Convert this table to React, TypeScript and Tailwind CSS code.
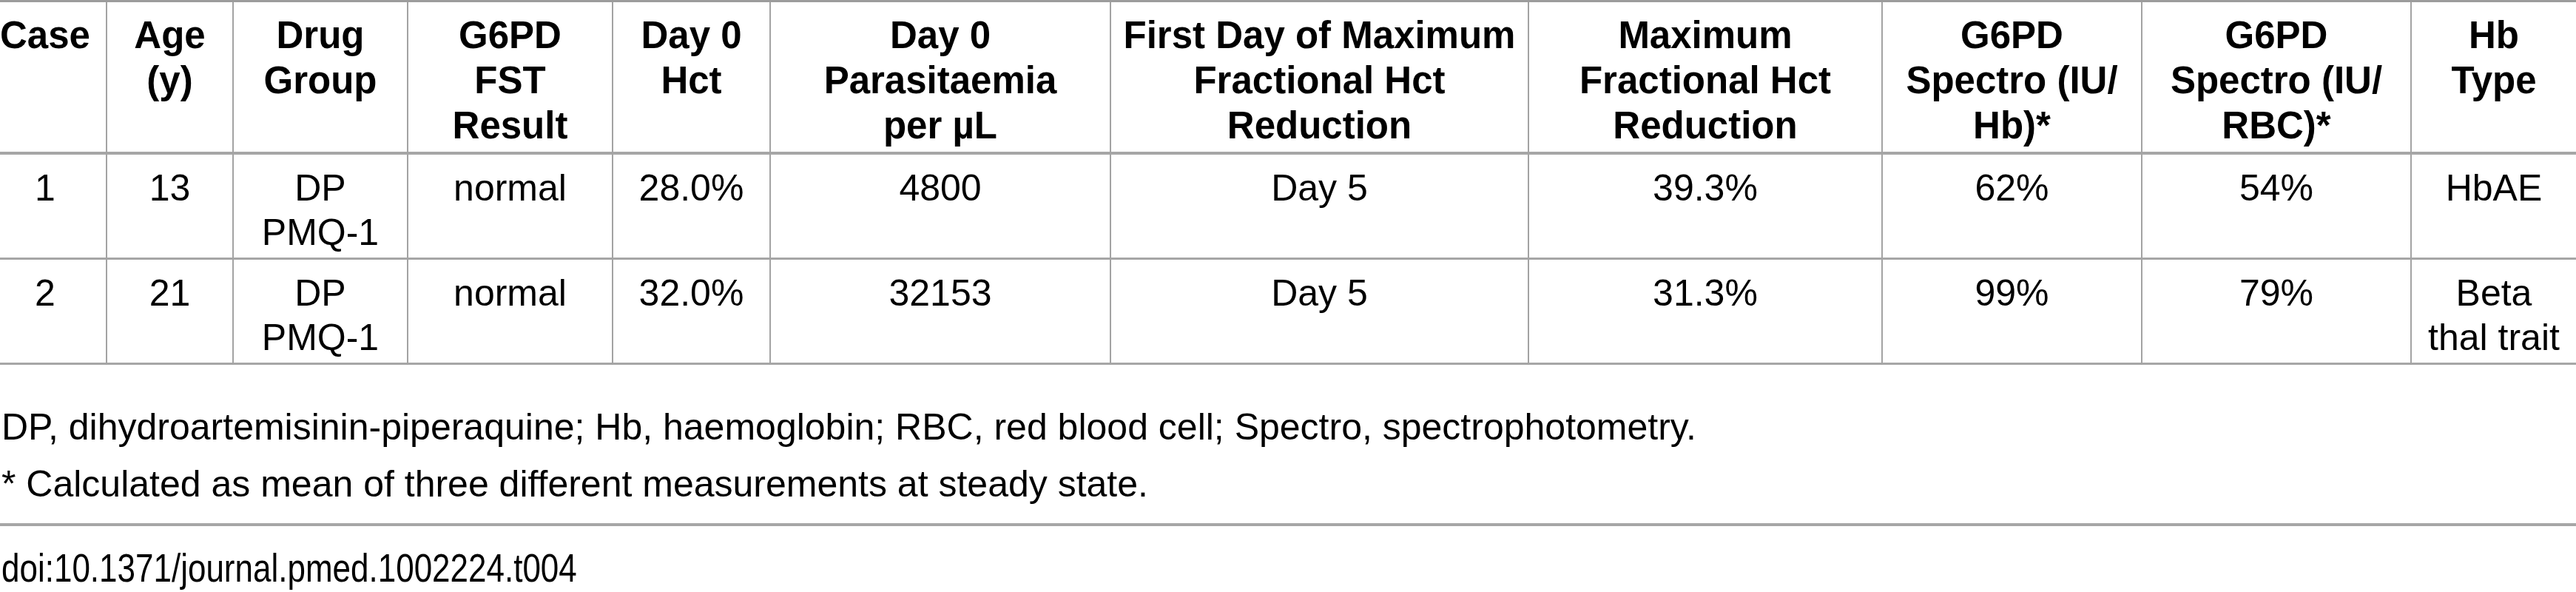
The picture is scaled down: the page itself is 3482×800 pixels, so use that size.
import React from "react";

const cols = [
  { h: ["Case"], r1: ["1"], r2: ["2"] },
  { h: ["Age", "(y)"], r1: ["13"], r2: ["21"] },
  { h: ["Drug", "Group"], r1: ["DP", "PMQ-1"], r2: ["DP", "PMQ-1"] },
  { h: ["G6PD", "FST", "Result"], r1: ["normal"], r2: ["normal"] },
  { h: ["Day 0", "Hct"], r1: ["28.0%"], r2: ["32.0%"] },
  { h: ["Day 0", "Parasitaemia", "per µL"], r1: ["4800"], r2: ["32153"] },
  { h: ["First Day of Maximum", "Fractional Hct", "Reduction"], r1: ["Day 5"], r2: ["Day 5"] },
  { h: ["Maximum", "Fractional Hct", "Reduction"], r1: ["39.3%"], r2: ["31.3%"] },
  { h: ["G6PD", "Spectro (IU/", "Hb)*"], r1: ["62%"], r2: ["99%"] },
  { h: ["G6PD", "Spectro (IU/", "RBC)*"], r1: ["54%"], r2: ["79%"] },
  { h: ["Hb", "Type"], r1: ["HbAE"], r2: ["Beta", "thal trait"] },
];

function Lines({ lines }: { lines: string[] }) {
  return (
    <>
      {lines.map((l, i) => (
        <div key={i} className="whitespace-nowrap">
          {l}
        </div>
      ))}
    </>
  );
}

export default function App() {
  const cellBase = "text-center border-[#a3a3a3]";
  return (
    <div
      className="w-[3482px] h-[800px] bg-white text-black overflow-hidden"
      style={{ fontFamily: '"Liberation Sans", Arial, sans-serif' }}
    >
      <div className="border-t-[3px] border-[#9c9c9c]">
        <div className="grid grid-cols-[143px_171px_236px_277px_213px_460px_565px_478px_351px_364px_224px]">
          {cols.map((c, i) => (
            <div
              key={"h" + i}
              className={`${cellBase} ${i > 0 ? "border-l-2" : "pr-[21px]"} h-[206px] pt-[14px] border-b-4 border-b-[#a6a6a6] font-bold text-[51px] leading-[61px]`}
            >
              <Lines lines={c.h} />
            </div>
          ))}
          {cols.map((c, i) => (
            <div
              key={"a" + i}
              className={`${cellBase} ${i > 0 ? "border-l-2" : "pr-[21px]"} h-[142px] pt-[15px] border-b-[3px] border-b-[#a6a6a6] text-[50px] leading-[60px]`}
            >
              <Lines lines={c.r1} />
            </div>
          ))}
          {cols.map((c, i) => (
            <div
              key={"b" + i}
              className={`${cellBase} ${i > 0 ? "border-l-2" : "pr-[21px]"} h-[142px] pt-[15px] border-b-[3px] border-b-[#a6a6a6] text-[50px] leading-[60px]`}
            >
              <Lines lines={c.r2} />
            </div>
          ))}
        </div>
      </div>
      <div className="mt-[46px] pl-[2px] text-[50px] leading-[77px]">
        <div className="whitespace-nowrap">
          DP, dihydroartemisinin-piperaquine; Hb, haemoglobin; RBC, red blood cell; Spectro, spectrophotometry.
        </div>
        <div className="whitespace-nowrap">* Calculated as mean of three different measurements at steady state.</div>
      </div>
      <div className="mt-[14px] border-t-4 border-[#a6a6a6]" />
      <div className="mt-[27px] pl-[2px] text-[53px] leading-[60px] whitespace-nowrap">
        <div className="inline-block origin-left scale-x-[0.83]">doi:10.1371/journal.pmed.1002224.t004</div>
      </div>
    </div>
  );
}
